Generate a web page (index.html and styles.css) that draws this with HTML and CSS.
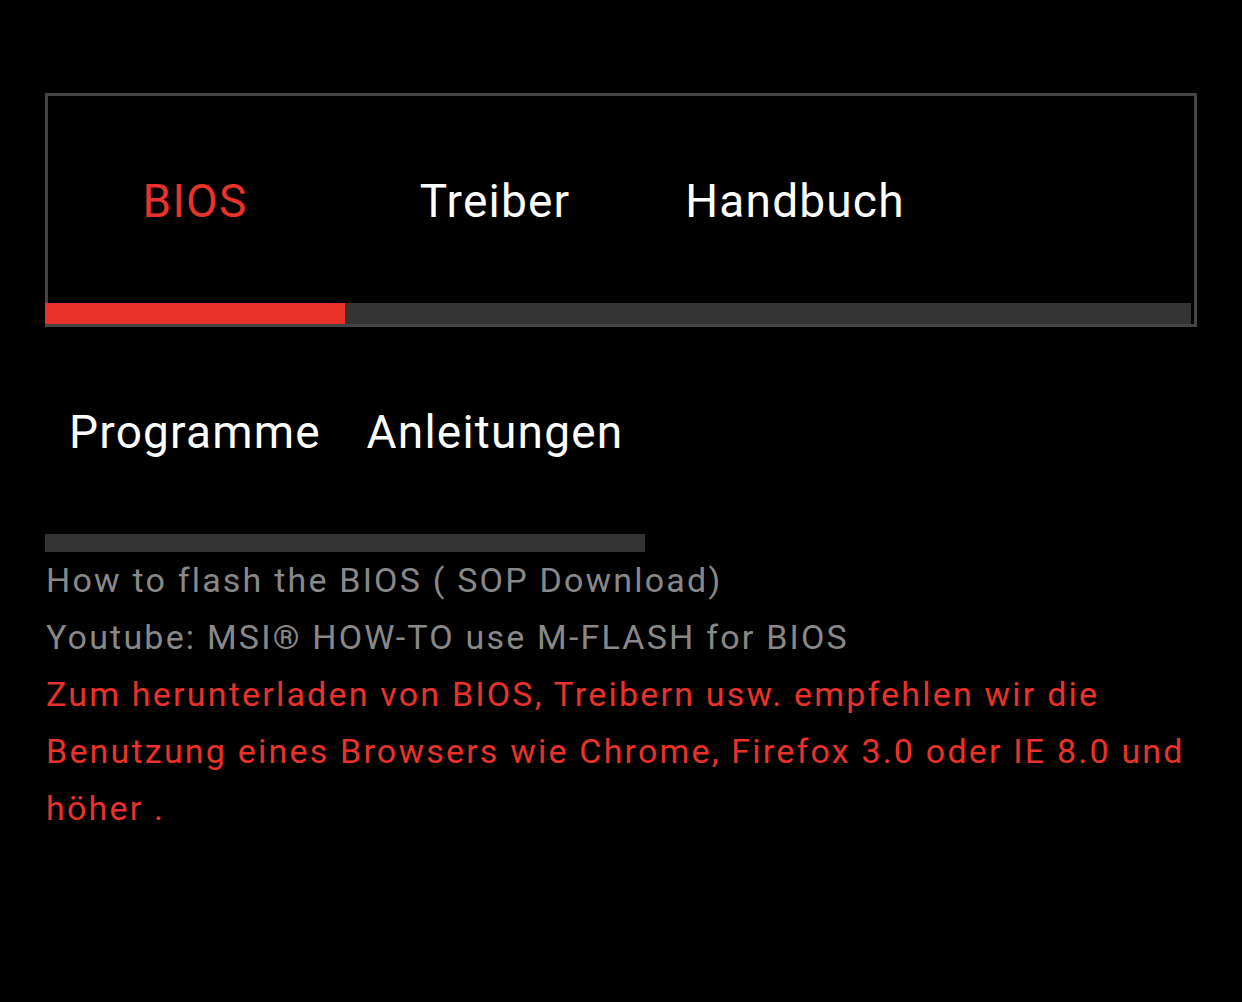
FILE: index.html
```html
<!DOCTYPE html>
<html lang="de">
<head>
  <meta charset="UTF-8" />
  <meta name="viewport" content="width=device-width, initial-scale=1" />
  <title>Support - Downloads</title>
  <link rel="stylesheet" href="styles.css">
</head>
<body>
  <div class="support">
    <div class="tabs-box">
      <div class="tab-inner">
        <ul class="tab-row">
          <li class="tab active">BIOS</li>
          <li class="tab">Treiber</li>
          <li class="tab">Handbuch</li>
        </ul>
        <div class="tab-bar"><span class="tab-bar-fill"></span></div>
      </div>
    </div>

    <ul class="tab-row">
      <li class="tab">Programme</li>
      <li class="tab">Anleitungen</li>
    </ul>
    <div class="tab-bar short"></div>

    <div class="notes">
      <p class="note">How to flash the BIOS ( SOP Download)</p>
      <p class="note">Youtube: MSI® HOW-TO use M-FLASH for BIOS</p>
      <p class="note warn">Zum herunterladen von BIOS, Treibern usw. empfehlen wir die Benutzung eines Browsers wie Chrome, Firefox 3.0 oder IE 8.0 und höher .</p>
    </div>
  </div>
</body>
</html>
```

FILE: styles.css
```css
body {
  margin: 0;
  background-color: #000;
  font-family: Roboto, "Liberation Sans", sans-serif;
  color: #fff;
}

.support {
  width: 1152px;
  padding: 93px 45px 0;
}

.tabs-box {
  border: 3px solid #444;
}

.tab-inner {
  margin-left: -3px;
  margin-right: 3px;
}

.tab-row {
  display: flex;
  list-style: none;
  margin: 0;
  padding: 0;
  height: 207px;
}

.tab {
  width: 300px;
  padding-top: 3px;
  display: flex;
  align-items: center;
  justify-content: center;
  font-size: 46px;
  letter-spacing: 1.2px;
  color: #fff;
  cursor: pointer;
}

.tab.active {
  color: #e8322a;
}

.tab-bar {
  height: 21px;
  background-color: #333;
}

.tab-bar-fill {
  display: block;
  width: 300px;
  height: 100%;
  background-color: #e8322a;
}

.tab-bar.short {
  width: 600px;
  height: 18px;
}

.notes {
  padding-left: 1px;
}

.note {
  margin: 0;
  font-size: 34px;
  line-height: 57px;
  letter-spacing: 2.2px;
  color: #888;
}

.note.warn {
  color: #e8322a;
}
```
